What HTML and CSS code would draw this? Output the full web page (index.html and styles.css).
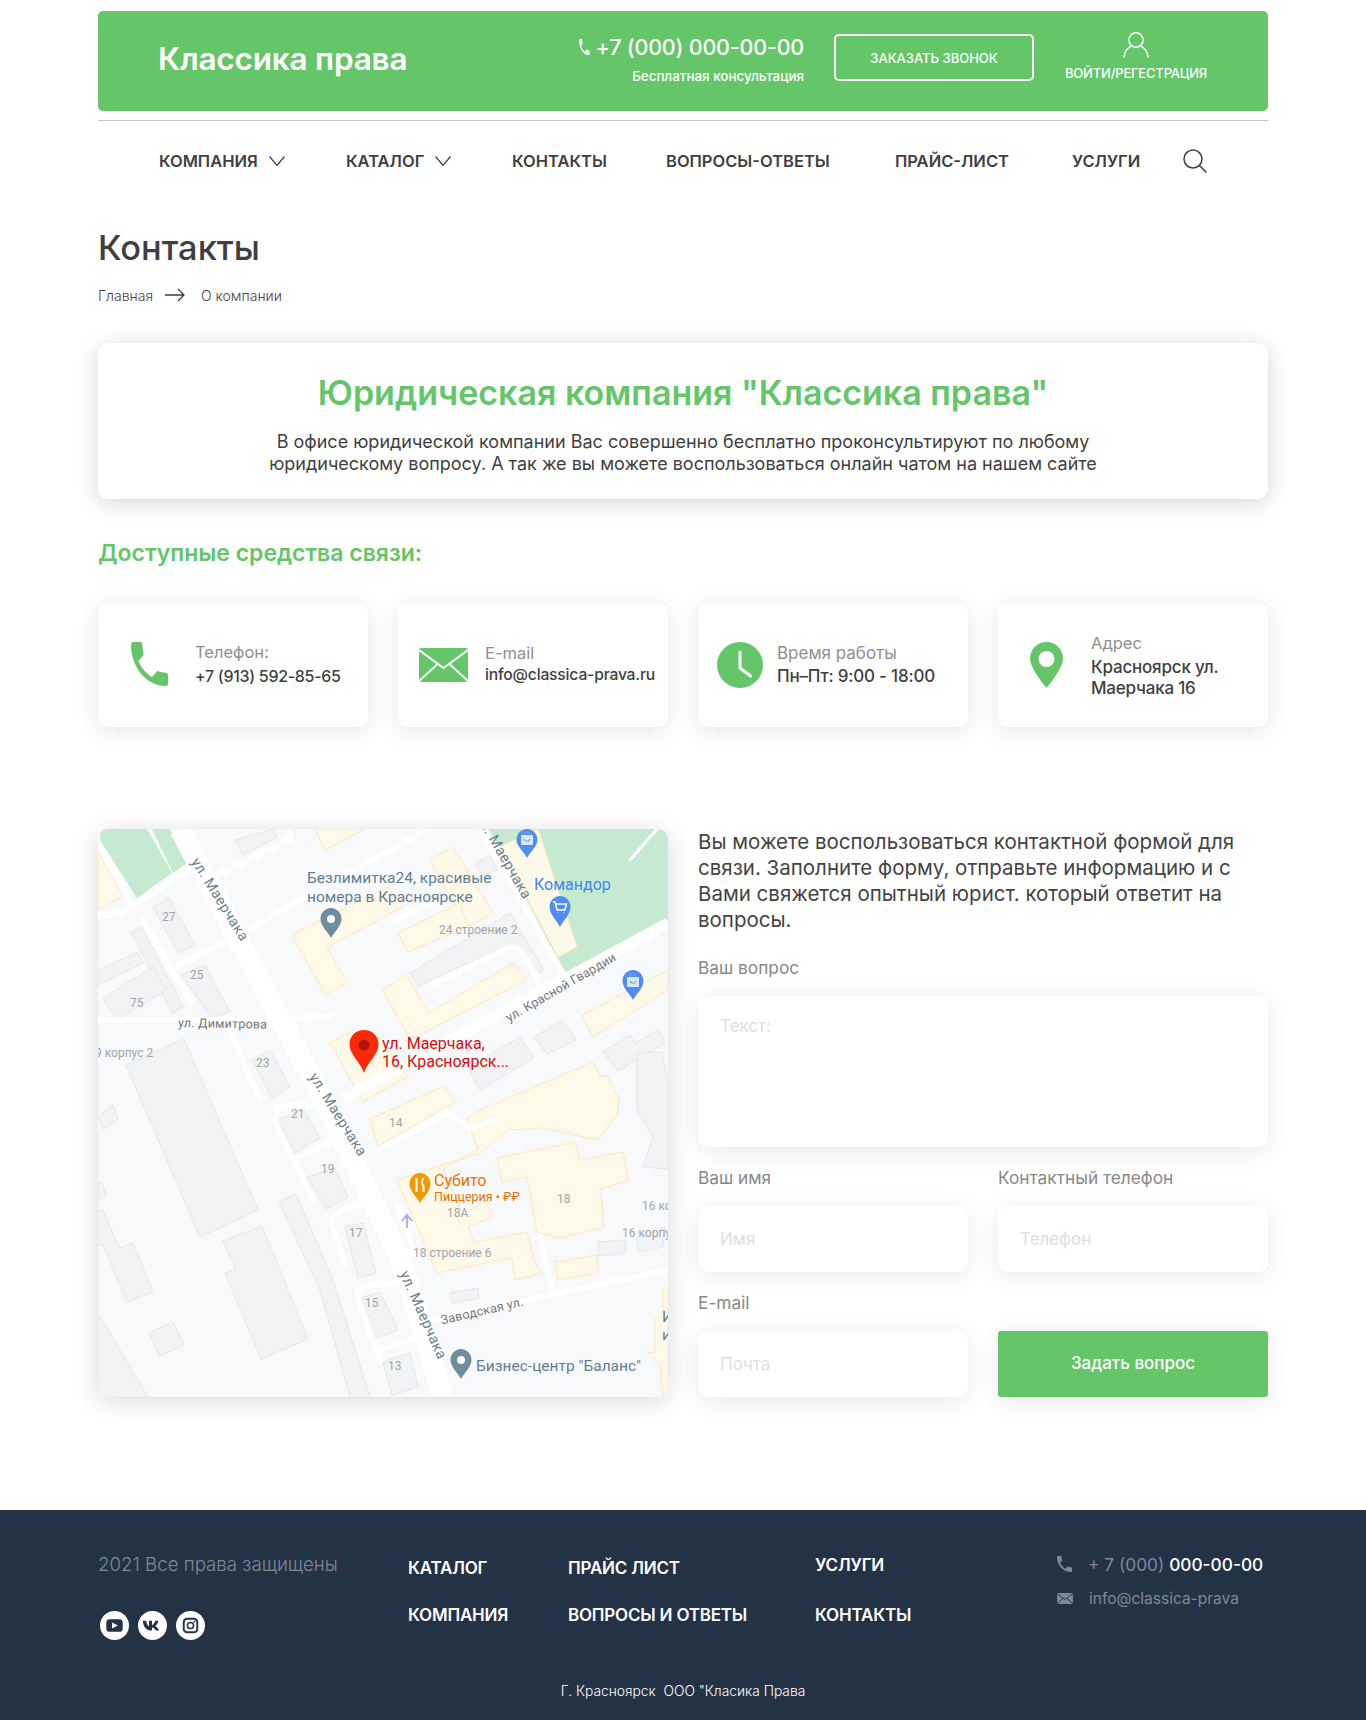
FILE: index.html
```html
<!DOCTYPE html>
<html lang="ru">
<head>
<meta charset="utf-8">
<title>Контакты — Классика права</title>
<link rel="stylesheet" href="styles.css">
</head>
<body>
<div class="wrap">
  <header class="top">
    <div class="logo">Классика права</div>
    <div class="phone-block">
      <div class="phone-line">
        <svg class="phone-ico" viewBox="3 3 18 18" preserveAspectRatio="none"><path d="M6.6 10.8c1.4 2.8 3.8 5.1 6.6 6.6l2.2-2.2c.3-.3.7-.4 1-.2 1.1.4 2.3.6 3.6.6.6 0 1 .4 1 1V20c0 .6-.4 1-1 1C10.6 21 3 13.4 3 4c0-.6.4-1 1-1h3.5c.6 0 1 .4 1 1 0 1.2.2 2.4.6 3.6.1.3 0 .7-.2 1l-2.3 2.2z"/></svg>
        <span class="phone-num">+7 (000) 000-00-00</span>
      </div>
      <div class="phone-sub">Бесплатная консультация</div>
    </div>
    <a class="call-btn">ЗАКАЗАТЬ ЗВОНОК</a>
    <div class="login">
      <svg class="user-ico" viewBox="0 0 26 26"><circle cx="13" cy="8" r="7.2"/><path d="M1 25.5C1.5 19.5 5 15.8 8 14.2M25 25.5C24.500 19.500 21 15.800 18 14.200"/></svg>
      <span class="login-text">ВОЙТИ/РЕГЕСТРАЦИЯ</span>
    </div>
  </header>
  <div class="rule"></div>
  <nav class="nav">
    <a class="nav-item">КОМПАНИЯ<svg class="chev" viewBox="0 0 16 10"><path d="M.5.5 8 9.500 15.500.5"/></svg></a>
    <a class="nav-item">КАТАЛОГ<svg class="chev" viewBox="0 0 16 10"><path d="M.5.5 8 9.500 15.500.5"/></svg></a>
    <a class="nav-item">КОНТАКТЫ</a>
    <a class="nav-item">ВОПРОСЫ-ОТВЕТЫ</a>
    <a class="nav-item">ПРАЙС-ЛИСТ</a>
    <a class="nav-item">УСЛУГИ</a>
    <svg class="search" viewBox="0 0 24 24"><circle cx="10" cy="10" r="9"/><path d="M16.500 16.500 23.500 23.500"/></svg>
  </nav>

  <h1 class="title">Контакты</h1>
  <div class="crumbs">
    <span>Главная</span>
    <svg class="crumb-arrow" viewBox="0 0 20 14"><path d="M0 7H19M13 1l6 6-6 6"/></svg>
    <span>О компании</span>
  </div>

  <section class="intro">
    <h2 class="intro-title">Юридическая компания "Классика права"</h2>
    <p class="intro-text">В офисе юридической компании Вас совершенно бесплатно проконсультируют по любому<br>юридическому вопросу. А так же вы можете воспользоваться онлайн чатом на нашем сайте</p>
  </section>

  <h3 class="means">Доступные средства связи:</h3>

  <div class="cards">
    <div class="card card-phone">
      <svg class="ic-phone" viewBox="3 3 18 18" preserveAspectRatio="none"><path d="M6.600 10.800c1.400 2.800 3.800 5.100 6.600 6.600l2.200-2.200c.3-.3.7-.4 1-.2 1.100.4 2.300.6 3.600.6.6 0 1 .4 1 1V20c0 .6-.4 1-1 1C10.600 21 3 13.400 3 4c0-.6.4-1 1-1h3.500c.6 0 1 .4 1 1 0 1.200.2 2.400.6 3.600.1.300 0 .7-.2 1l-2.300 2.200z"/></svg>
      <div class="card-body"><div class="card-label">Телефон:</div><div class="card-value">+7 (913) 592-85-65</div></div>
    </div>
    <div class="card card-mail">
      <svg class="ic-mail" viewBox="0 0 49 34"><rect width="49" height="34" rx="2"/><path d="M0 2 24.500 20 49 2M0 33 18 16.500M49 33 31 16.500"/></svg>
      <div class="card-body"><div class="card-label">E-mail</div><div class="card-value">info@classica-prava.ru</div></div>
    </div>
    <div class="card card-time">
      <svg class="ic-clock" viewBox="0 0 46 46"><circle cx="23" cy="23" r="23"/><path d="M23 10V26L33.500 34"/></svg>
      <div class="card-body"><div class="card-label">Время работы</div><div class="card-value">Пн–Пт: 9:00 - 18:00</div></div>
    </div>
    <div class="card card-addr">
      <svg class="ic-pin" viewBox="0 0 33 46"><path d="M16.500 0C7.400 0 0 7.400 0 16.500 0 24 9 37 16.500 46 24 37 33 24 33 16.500 33 7.400 25.600 0 16.500 0z"/><circle cx="16.500" cy="17" r="8"/></svg>
      <div class="card-body"><div class="card-label">Адрес</div><div class="card-value addr-value">Красноярск ул.<br>Маерчака 16</div></div>
    </div>
  </div>

  <div class="contact-row">
    <div class="map">
      <svg class="map-svg" viewBox="0 0 570 568">
        <rect width="570" height="568" fill="#f8f9fb"/>
        <g class="m-green">
          <polygon points="2,11 2,0 49,0 74,44 39,69"/>
          <polygon points="54,0 72,0 89,34 75,44"/>
          <polygon points="390,0 570,0 570,91 467,146 402,18"/>
        </g>
        <g class="m-grey">
          <polygon points="0,484 50,568 0,568"/>
          <polygon points="55,78 71,69 97,116 80,124"/>
          <polygon points="33,103 44,98 85,178 74,184"/>
          <polygon points="0,141 40,123 45,134 0,156"/>
          <polygon points="5,169 55,138 69,161 19,191"/>
          <polygon points="83,146 107,136 132,183 114,189"/>
          <polygon points="154,231 172,221 192,258 174,269"/>
          <polygon points="28,236 86,210 160,381 102,408"/>
          <polygon points="125,412 164,397 210,510 163,530 127,444 138,440"/>
          <polygon points="181,373 198,365 235,451 272,568 252,568 222,461"/>
          <polygon points="51,504 75,493 86,516 61,527"/>
          <polygon points="0,381 5,381 21,419 35,414 55,463 29,473 5,416 0,416"/>
          <polygon points="0,353 4,353 8,366 0,372"/>
          <polygon points="180,291 205,280 222,309 197,324"/>
          <polygon points="209,348 237,339 250,368 228,380"/>
          <polygon points="247,398 265,394 278,444 260,449"/>
          <polygon points="264,469 282,463 300,501 277,510"/>
          <polygon points="285,533 312,524 320,558 294,566"/>
          <polygon points="352,464 380,459 381,469 354,474"/>
          <polygon points="312,144 412,84 446,141 439,144 414,114 320,157"/>
          <polygon points="377,34 392,27 399,41 384,46"/>
          <polygon points="436,208 464,191 478,211 449,225"/>
          <polygon points="370,239 422,208 436,229 382,261"/>
          <polygon points="505,223 532,206 537,214 560,201 567,214 520,242"/>
          <polygon points="539,224 564,223 570,254 570,340 545,338 555,308 539,281"/>
          <polygon points="500,413 527,411 528,423 515,426 500,426"/>
          <polygon points="539,409 567,398 565,418 540,423"/>
          <polygon points="137,11 175,0 179,8 145,26"/>
          <polygon points="0,287 15,276 20,290 5,300"/>
        </g>
        <g class="m-yellow">
          <polygon points="194,106 290,58 305,78 229,118 249,154 227,166"/>
          <polygon points="332,31 355,18 395,84 369,98"/>
          <polygon points="300,104 362,74 369,98 310,123"/>
          <polygon points="217,0 267,0 227,21"/>
          <polygon points="0,23 25,68 0,81"/>
          <polygon points="402,18 440,0 479,118 460,128"/>
          <polygon points="285,161 308,145 331,184 416,134 428,151 312,211"/>
          <polygon points="232,214 254,202 265,225 282,208 309,248 265,273"/>
          <polygon points="272,290 346,257 357,273 280,317"/>
          <polygon points="484,186 570,141 570,161 495,208"/>
          <polygon points="382,281 495,233 502,248 509,246 521,271 519,286 500,311 445,299 410,301 382,324 299,351 339,444 414,429 417,451 444,444 437,434 429,403 377,413 370,398 395,388 390,371 365,385 345,340 380,320 369,289"/>
          <polygon points="399,329 477,313 482,331 525,323 531,351 503,360 506,398 462,409 439,403 429,348 404,353"/>
          <polygon points="457,433 499,426 500,444 460,451"/>
          <polygon points="565,459 570,459 570,566 565,566 562,536 550,524 557,523 557,489 565,488"/>
        </g>
        <g class="m-road-thin">
          <path d="M149 101 330 0"/>
          <path d="M119 46 192 10V0"/>
          <path d="M75 139 132 111"/>
          <path d="M45 91 92 173"/>
          <path d="M0 86C20 88 30 80 39 74L92 41"/>
          <path d="M0 14 35 78"/>
          <path d="M0 191H172L232 188"/>
          <path d="M132 201C145 230 150 250 162 268"/>
          <path d="M382 0 467 148"/>
          <path d="M335 491 570 441"/>
          <path d="M282 456 320 450"/>
          <path d="M442 408 454 459"/>
          <path d="M300 378 318 430"/>
          <path d="M215 371 178 295V281C178 275 205 275 232 281"/>
          <path d="M200 329 240 309"/>
          <path d="M247 436 234 395C232 385 250 378 268 374"/>
          <path d="M282 531 259 466C258 460 270 456 282 454"/>
          <path d="M282 521 319 508"/>
          <path d="M337 154 410 119C420 115 425 122 445 161"/>
          <path d="M299 91 339 71"/>
          <path d="M282 321 349 284 372 299 397 291"/>
          <path d="M532 31 559 0" class="thin2"/>
        </g>
        <path class="m-road-mid" d="M570 94 245 270"/>
        <path class="m-road-main" d="M82 0 142 114 222 264 302 428 345 568"/>
        <path class="m-arrow" d="M309 399V387M304 392 309 386 314 392"/>

        <g class="m-road-label">
          <text transform="translate(118 73) rotate(58)" text-anchor="middle">ул. Маерчака</text>
          <text transform="translate(402 30) rotate(60)" text-anchor="middle">ул. Маерчака</text>
          <text transform="translate(236 288) rotate(58)" text-anchor="middle">ул. Маерчака</text>
          <text transform="translate(321 488) rotate(66)" text-anchor="middle">ул. Маерчака</text>
          <text class="road-sm" transform="translate(465 162) rotate(-30)" text-anchor="middle">ул. Красной Гвардии</text>
          <text class="road-sm" transform="translate(80 198) rotate(1)">ул. Димитрова</text>
          <text class="road-sm" transform="translate(385 486) rotate(-13)" text-anchor="middle">Заводская ул.</text>
        </g>
        <g class="m-num">
          <text x="64" y="92">27</text><text x="92" y="150">25</text><text x="32" y="178">75</text>
          <text x="158" y="238">23</text><text x="193" y="289">21</text><text x="223" y="344">19</text>
          <text x="251" y="408">17</text><text x="267" y="478">15</text><text x="291" y="298">14</text>
          <text x="349" y="388">18A</text><text x="459" y="374">18</text><text x="290" y="541">13</text>
          <text x="-3" y="228">9 корпус 2</text><text x="341" y="105">24 строение 2</text>
          <text x="315" y="428">18 строение 6</text><text x="544" y="381">16 ко</text><text x="524" y="408">16 корпу</text>
        </g>
        <g class="m-slate">
          <text x="209" y="54">Безлимитка24, красивые</text>
          <text x="209" y="73">номера в Красноярске</text>
          <text x="378" y="542">Бизнес-центр "Баланс"</text>
          <text x="564" y="493">И</text>
          <text x="564" y="511">и</text>
        </g>
        <text class="m-blue" x="436" y="61">Командор</text>
        <g class="m-red"><text x="284" y="220">ул. Маерчака,</text><text x="284" y="238">16, Красноярск...</text></g>
        <text class="m-orange" x="336" y="357">Субито</text>
        <text class="m-orange-sm" x="336" y="372">Пиццерия • ₽₽</text>

        <g>
          <path class="pin-slate" d="M233 79C227 79 222.500 84 222.500 90 222.500 97 230 103 233 109 236 103 243.500 97 243.500 90 243.500 84 239 79 233 79z"/>
          <circle cx="233" cy="90" r="4" fill="#fff"/>
          <path class="pin-slate" d="M363 520C357 520 352.500 525 352.500 531 352.500 538 360 544 363 550 366 544 373.500 538 373.500 531 373.500 525 369 520 363 520z"/>
          <circle cx="363" cy="531" r="4" fill="#fff"/>
          <path class="pin-blue" d="M462 67C456 67 451.500 72 451.500 78 451.500 85 459 92 462 98 465 92 472.500 85 472.500 78 472.500 72 468 67 462 67z"/>
          <path class="pin-glyph" d="M455 73H457L459 81H467L468.500 75H458M460 83.500V84M466 83.500V84"/>
          <path class="pin-blue" d="M429 0C423 0 418.500 5 418.500 11 418.500 17 426 23 429 29 432 23 439.500 17 439.500 11 439.500 5 435 0 429 0z"/>
          <rect class="pin-fill" x="423" y="6" width="12" height="10" rx="1"/>
          <path class="pin-bag" d="M426 6C426 2.500 432 2.500 432 6M426 10C427 13 431 13 432 10"/>
          <path class="pin-blue" d="M535 141C529 141 524.500 146 524.500 152 524.500 159 532 165 535 171 538 165 545.500 159 545.500 152 545.500 146 541 141 535 141z"/>
          <rect class="pin-fill" x="529" y="148" width="12" height="10" rx="1"/>
          <path class="pin-bag" d="M532 148C532 144.500 538 144.500 538 148M532 152C533 155 537 155 538 152"/>
          <path class="pin-orange" d="M322 344C316 344 311.500 349 311.500 355 311.500 362 319 368 322 374 325 368 332.500 362 332.500 355 332.500 349 328 344 322 344z"/>
          <path class="pin-glyph-w" d="M318.500 349V355M318.500 355V363M325.500 349C323.500 352 323.500 356 325.500 357V363"/>
          <path class="pin-red" d="M266 201C258 201 251.500 207 251.500 215 251.500 226 262 232 266 244 270 232 280.500 226 280.500 215 280.500 207 274 201 266 201z"/>
          <circle cx="266" cy="216" r="5.500" fill="#b31412"/>
        </g>
      </svg>
    </div>

    <form class="form">
      <p class="form-text">Вы можете воспользоваться контактной формой для связи. Заполните форму, отправьте информацию и с Вами свяжется опытный юрист. который ответит на вопросы.</p>
      <div class="fields">
        <label class="field field-wide"><span class="field-label">Ваш вопрос</span><textarea class="control area" placeholder="Текст:"></textarea></label>
        <label class="field"><span class="field-label">Ваш имя</span><input class="control" placeholder="Имя"></label>
        <label class="field"><span class="field-label">Контактный телефон</span><input class="control" placeholder="Телефон"></label>
        <label class="field"><span class="field-label">E-mail</span><input class="control" placeholder="Почта"></label>
        <button class="submit" type="button">Задать вопрос</button>
      </div>
    </form>
  </div>
</div>

<footer class="footer">
  <div class="foot-wrap">
    <div class="foot-top">
      <div class="foot-left">
        <div class="rights">2021 Все права защищены</div>
        <div class="socials">
          <svg class="soc" viewBox="0 0 30 30"><circle cx="15" cy="15" r="15" fill="#fff"/><rect x="6.500" y="8.500" width="17" height="13" rx="3.500" fill="#243246"/><path d="M12.500 12 18.500 15 12.500 18z" fill="#fff"/></svg>
          <svg class="soc" viewBox="0 0 30 30"><circle cx="15" cy="15" r="15" fill="#fff"/><path d="M5 10h3.400c.6 3.300 1.900 5.300 3 5.800V10h3.100v4.600c1.200-.3 2.700-2 3.300-4.600H21c-.5 2.900-2 4.700-3.300 5.500 1.500.7 3.200 2.400 4.200 4.800h-3.500c-.8-1.900-2.200-3.100-3.900-3.300v3.300h-.8C9.200 20.300 5.400 16.500 5 10z" fill="#243246"/></svg>
          <svg class="soc" viewBox="0 0 30 30"><circle cx="15" cy="15" r="15" fill="#fff"/><rect x="7" y="7" width="16" height="16" rx="4.500" fill="#243246"/><rect x="9" y="9" width="12" height="12" rx="3" fill="#fff"/><circle cx="15" cy="15" r="3.200" fill="none" stroke="#243246" stroke-width="1.600"/><circle cx="19" cy="11" r="1" fill="#243246"/></svg>
        </div>
      </div>
      <div class="foot-nav fn1"><a>КАТАЛОГ</a><a>КОМПАНИЯ</a></div>
      <div class="foot-nav fn2"><a>ПРАЙС ЛИСТ</a><a>ВОПРОСЫ И ОТВЕТЫ</a></div>
      <div class="foot-nav fn3"><a>УСЛУГИ</a><a>КОНТАКТЫ</a></div>
      <div class="foot-contacts">
        <div class="fc-phone">
          <svg class="fc-ico-phone" viewBox="3 3 18 18" preserveAspectRatio="none"><path d="M6.600 10.800c1.400 2.800 3.800 5.100 6.600 6.600l2.200-2.200c.3-.3.7-.4 1-.2 1.100.4 2.300.6 3.600.6.6 0 1 .4 1 1V20c0 .6-.4 1-1 1C10.600 21 3 13.400 3 4c0-.6.4-1 1-1h3.500c.6 0 1 .4 1 1 0 1.200.2 2.400.6 3.600.1.300 0 .7-.2 1l-2.300 2.200z"/></svg>
          <span class="dim">+ 7 (000)</span>&nbsp;<span class="bright">000-00-00</span>
        </div>
        <div class="fc-mail">
          <svg class="fc-ico-mail" viewBox="0 0 49 34"><rect width="49" height="34" rx="2"/><path d="M0 2 24.500 20 49 2M0 33 18 16.500M49 33 31 16.500"/></svg>
          <span class="dim">info@classica-prava</span>
        </div>
      </div>
    </div>
    <div class="foot-bottom">Г. Красноярск&nbsp; ООО "Класика Права</div>
  </div>
</footer>
</body>
</html>
```

FILE: styles.css
```css
* { box-sizing: border-box; }
html, body { margin: 0; padding: 0; }
body { background: #fff; color: #3f3f3f; font-family: "Inter", "Noto Sans", sans-serif; }
a { color: inherit; text-decoration: none; }
.wrap { width: 1170px; margin: 0 auto; }

.top { margin-top: 11px; height: 100px; background: #65c669; border-radius: 5px; display: flex; align-items: flex-start; color: #fff; position: relative; }
.logo { margin-left: 60px; margin-top: 28px; font-size: 31.500px; line-height: 40px; font-weight: 600; white-space: nowrap; letter-spacing: -.2px; width: 421px; }
.phone-block { width: 225px; margin-top: 21px; text-align: right; }
.phone-line { display: flex; align-items: center; justify-content: flex-end; height: 30px; }
.phone-ico { width: 12px; height: 16px; fill: #fff; margin-right: 6px; }
.phone-num { font-size: 21.500px; font-weight: 500; white-space: nowrap; letter-spacing: -.2px; }
.phone-sub { font-size: 13.400px; line-height: 18px; margin-top: 5px; font-weight: 500; white-space: nowrap; }
.call-btn { margin-left: 30px; margin-top: 23px; width: 200px; height: 47px; border: 2px solid #fff; border-radius: 5px; display: flex; align-items: center; justify-content: center; font-size: 13px; font-weight: 500; }
.login { margin-left: 32px; width: 140px; margin-top: 21px; display: flex; flex-direction: column; align-items: center; }
.user-ico { width: 26px; height: 26px; fill: none; stroke: #fff; stroke-width: 1.500; }
.login-text { margin-top: 7px; font-size: 13px; line-height: 16px; font-weight: 500; white-space: nowrap; letter-spacing: -.2px; }

.rule { margin-top: 9px; height: 1px; background: #c6c6c6; }
.nav { height: 80px; padding-left: 61px; display: grid; grid-template-columns: 187px 166px 154px 229px 177px 111px auto; align-items: center; }
.nav-item { font-size: 16.500px; font-weight: 600; line-height: 24px; white-space: nowrap; display: flex; align-items: center; }
.chev { width: 16px; height: 10px; margin-left: 11px; fill: none; stroke: #3f3f3f; stroke-width: 1.200; }
.search { width: 24px; height: 24px; fill: none; stroke: #3f3f3f; stroke-width: 1.500; }

.title { margin: 25px 0 0; font-size: 34.400px; line-height: 44px; font-weight: 500; color: #3f3f3f; }
.crumbs { margin-top: 15px; height: 20px; display: flex; align-items: center; font-size: 14px; font-weight: 300; color: #444; }
.crumb-arrow { width: 20px; height: 14px; margin: 0 16px 0 12px; fill: none; stroke: #3f3f3f; stroke-width: 1.300; }

.intro { margin-top: 38px; height: 156px; background: #fff; border-radius: 10px; box-shadow: 0 4px 22px rgba(0,0,0,.16); text-align: center; padding-top: 28px; }
.intro-title { margin: 0; font-size: 34px; line-height: 44px; font-weight: 600; color: #65c669; white-space: nowrap; }
.intro-text { margin: 16px 0 0; font-size: 18px; line-height: 22px; color: #3f3f3f; white-space: nowrap; }
.means { margin: 39px 0 0; font-size: 23px; line-height: 30px; font-weight: 600; color: #65c669; }

.cards { margin-top: 35px; display: grid; grid-template-columns: repeat(4, 270px); column-gap: 30px; }
.card { height: 124px; background: #fff; border-radius: 10px; box-shadow: 0 4px 24px rgba(0,0,0,.10); display: flex; align-items: flex-start; }
.card-label { font-size: 16.500px; line-height: 22px; color: #8f8f8f; white-space: nowrap; }
.card-value { font-size: 16px; line-height: 22px; font-weight: 500; color: #3f3f3f; white-space: nowrap; letter-spacing: -.2px; }
.ic-phone { width: 37px; height: 44px; margin: 39px 0 0 33px; fill: #65c669; flex: none; }
.card-phone .card-body { margin: 38px 0 0 27px; }
.card-phone .card-value { margin-top: 2px; letter-spacing: -.3px; }
.ic-mail { width: 49px; height: 34px; margin: 45px 0 0 21px; flex: none; }
.ic-mail rect { fill: #65c669; }
.ic-mail path { fill: none; stroke: #fff; stroke-width: 2; }
.card-mail .card-body { margin: 39px 0 0 17px; }
.card-mail .card-value { font-size: 15.700px; }
.ic-clock { width: 46px; height: 46px; margin: 39px 0 0 19px; flex: none; }
.ic-clock circle { fill: #65c669; }
.ic-clock path { fill: none; stroke: #fff; stroke-width: 3; stroke-linecap: round; stroke-linejoin: round; }
.card-time .card-body { margin: 39px 0 0 14px; }
.card-time .card-label { font-size: 17px; }
.card-time .card-value { margin-top: 1px; font-size: 17px; }
.ic-pin { width: 33px; height: 46px; margin: 39px 0 0 32px; flex: none; }
.ic-pin path { fill: #65c669; }
.ic-pin circle { fill: #fff; }
.card-addr .card-body { margin: 29px 0 0 28px; }
.addr-value { margin-top: 3px; line-height: 21px; font-size: 17px; }

.contact-row { margin-top: 102px; display: grid; grid-template-columns: 570px 570px; column-gap: 30px; }
.map { width: 570px; height: 568px; border-radius: 10px; overflow: hidden; box-shadow: 0 4px 26px rgba(0,0,0,.15); }
.map-svg { display: block; width: 570px; height: 568px; font-family: "Roboto", sans-serif; }
.m-green polygon { fill: #c6ead0; }
.m-grey polygon { fill: #f1f3f4; stroke: #e4e6e8; stroke-width: 1; }
.m-yellow polygon { fill: #fff9e9; stroke: #fde9b9; stroke-width: 1; }
.m-road-thin path { fill: none; stroke: #fff; stroke-width: 6; stroke-linecap: round; stroke-linejoin: round; }
.m-road-thin .thin2 { stroke-width: 3; }
.m-road-mid { fill: none; stroke: #fff; stroke-width: 11; }
.m-road-main { fill: none; stroke: #fff; stroke-width: 21; stroke-linejoin: round; }
.m-arrow { fill: none; stroke: #a7aedb; stroke-width: 1.800; }
.m-road-label text { font-size: 14.500px; fill: #6b7f8a; letter-spacing: .4px; }
.m-road-label .road-sm { font-size: 12.500px; fill: #777; letter-spacing: .2px; }
.m-num text { font-size: 12px; fill: #a0a4a8; }
.m-slate text { font-size: 15.500px; fill: #5f7f90; }
.m-blue { font-size: 16px; fill: #3f86f5; }
.m-red text { font-size: 16px; fill: #d50f0f; }
.m-orange { font-size: 16px; fill: #e37400; }
.m-orange-sm { font-size: 12.500px; fill: #e37400; }
.pin-slate { fill: #6f8d9f; }
.pin-blue { fill: #4f8cf3; }
.pin-fill { fill: #dbe7fb; }
.pin-bag { fill: none; stroke: #dbe7fb; stroke-width: 1.200; }
.pin-bag { stroke: #6f9df5; }
.pin-glyph { fill: none; stroke: #fff; stroke-width: 1.500; }
.pin-orange { fill: #f29900; }
.pin-glyph-w { fill: none; stroke: #fff; stroke-width: 2; }
.pin-red { fill: #fb2a07; }

.form-text { margin: 0; font-size: 20.500px; line-height: 26px; color: #444; white-space: normal; }
.fields { margin-top: 25px; display: grid; grid-template-columns: 270px 270px; column-gap: 30px; row-gap: 21px; align-items: end; }
.field { display: flex; flex-direction: column; gap: 18px; }
.field-wide { grid-column: 1 / 3; }
.field-label { font-size: 17.300px; line-height: 20px; color: #888; }
.control { display: block; width: 100%; height: 66px; border: 0; outline: 0; border-radius: 10px; background: #fff; padding: 0 22px; font-family: inherit; font-size: 17px; box-shadow: 0 4px 24px rgba(0,0,0,.09); resize: none; }
.control::placeholder { color: #dedede; opacity: 1; }
.area { height: 151px; padding-top: 20px; }
.submit { height: 66px; border: 0; border-radius: 3px; background: #65c669; color: #fff; font-family: inherit; font-size: 17px; font-weight: 500; box-shadow: 0 4px 24px rgba(0,0,0,.09); padding: 0 0 2px; }

.footer { margin-top: 113px; height: 210px; background: #243246; color: #fff; }
.foot-wrap { width: 1170px; margin: 0 auto; padding-top: 44px; }
.foot-top { height: 85px; display: grid; grid-template-columns: 310px 160px 247px 242px 211px; }
.rights { font-size: 18.700px; line-height: 24px; font-weight: 300; color: #7f8895; white-space: nowrap; margin-top: -1px; }
.socials { margin-top: 34px; display: flex; gap: 9px; margin-left: 2px; }
.soc { width: 29px; height: 29px; }
.foot-nav { display: flex; flex-direction: column; gap: 19px; }
.foot-nav a { font-size: 17px; line-height: 28px; font-weight: 600; white-space: nowrap; letter-spacing: -.2px; }
.fn3 { margin-top: -3px; gap: 22px; }
.foot-contacts { margin-top: -2px; }
.fc-phone { display: flex; align-items: center; height: 24px; font-size: 17.300px; white-space: nowrap; }
.fc-ico-phone { width: 15px; height: 16px; margin-right: 16px; fill: #7f8895; flex: none; }
.fc-mail { display: flex; align-items: center; height: 20px; margin-top: 12px; font-size: 15.500px; white-space: nowrap; }
.fc-ico-mail { width: 16px; height: 11px; margin-right: 16px; flex: none; }
.fc-ico-mail rect { fill: #7f8895; }
.fc-ico-mail path { fill: none; stroke: #243246; stroke-width: 3; }
.dim { color: #7f8895; }
.bright { color: #fff; font-weight: 500; }
.foot-bottom { margin-top: 42px; font-size: 13.800px; line-height: 20px; text-align: center; font-weight: 300; white-space: nowrap; }
```
